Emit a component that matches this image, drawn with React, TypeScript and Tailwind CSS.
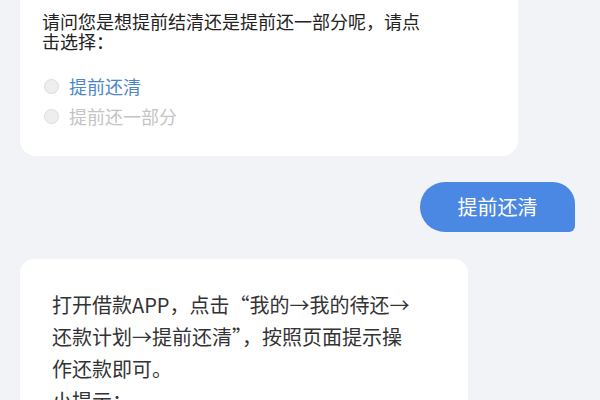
const font = { fontFamily: '"Noto Sans CJK SC", "Noto Sans", sans-serif' };

function Radio({ label, active }: { label: string; active?: boolean }) {
    return (
        <div className="flex items-center h-[30px]">
            <span className="w-[15px] h-[15px] rounded-full border border-[#dcdcdc] bg-[#eeeeee] ml-[2px]" />
            <span className={`ml-[10px] text-[18px] leading-[20px] ${active ? "text-[#4d86c9]" : "text-[#c4c4c4]"}`}>
                {label}
            </span>
        </div>
    );
}

export default function App() {
    return (
        <div className="w-[600px] h-[400px] overflow-hidden bg-[#f1f3f6] flex flex-col" style={font}>
            <div className="ml-[20px] w-[498px] bg-white rounded-b-[16px] pl-[22px] pt-[11px] pb-[25px]">
                <p className="text-[18px] leading-[20px] text-[#222222] whitespace-nowrap">
                    请问您是想提前结清还是提前还一部分呢，请点
                    <br />
                    击选择：
                </p>
                <div className="mt-[20px] flex flex-col">
                    <Radio label="提前还清" active />
                    <Radio label="提前还一部分" />
                </div>
            </div>

            <div className="flex justify-end pr-[25px] mt-[26px]">
                <div className="w-[155px] h-[50px] bg-[#4a88e4] text-white text-[20px] flex items-center justify-center rounded-l-[25px] rounded-tr-[22px] rounded-br-[6px]">
                    提前还清
                </div>
            </div>

            <div className="ml-[20px] mt-[27px] w-[448px] bg-white rounded-t-[14px] pl-[32px] pt-[30px] pb-[20px]">
                <p className="text-[20px] leading-[32px] text-[#333333] whitespace-nowrap">
                    打开借款APP，点击“我的→我的待还→
                    <br />
                    还款计划→提前还清”，按照页面提示操
                    <br />
                    作还款即可。
                    <br />
                    小提示：
                </p>
            </div>
        </div>
    );
}
